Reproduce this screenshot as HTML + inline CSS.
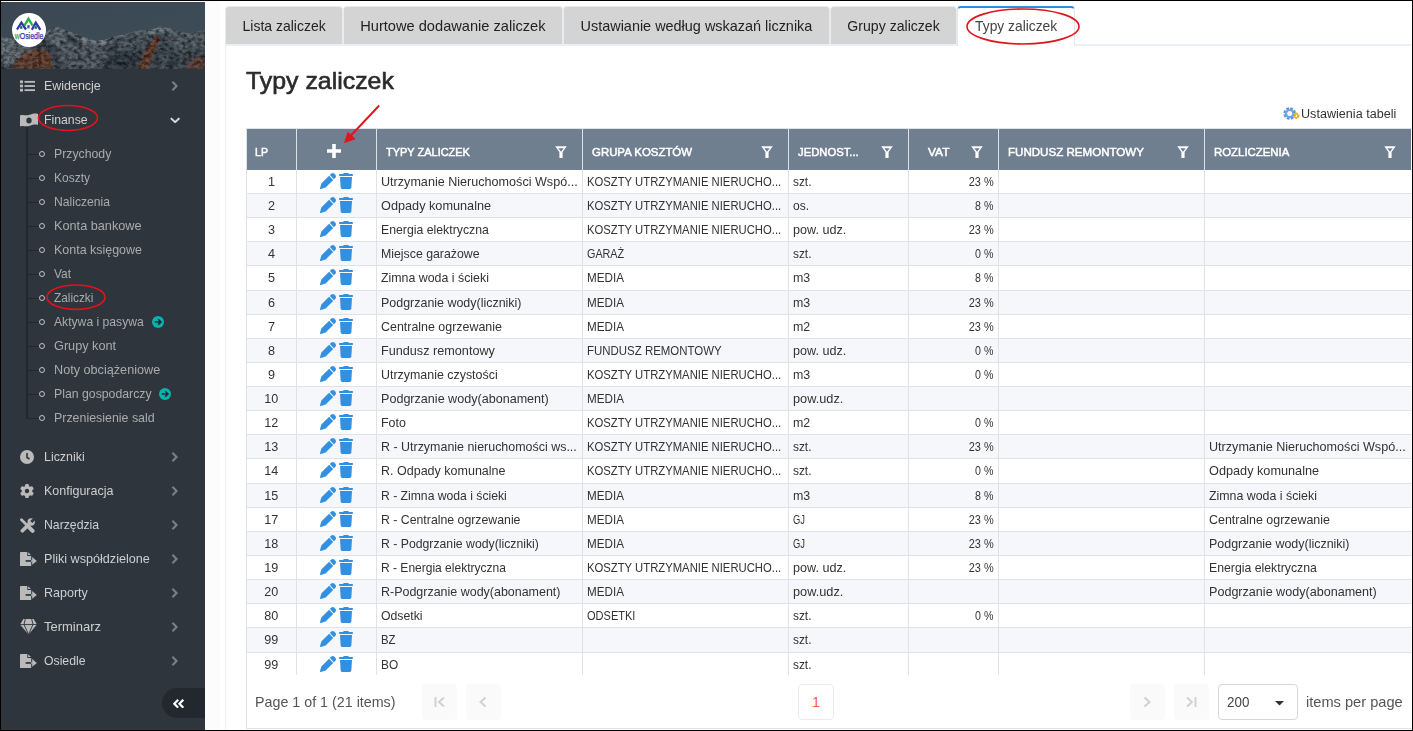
<!DOCTYPE html>
<html lang="pl"><head><meta charset="utf-8"><title>Typy zaliczek</title>
<style>
html,body{margin:0;padding:0}
body{width:1413px;height:731px;overflow:hidden;position:relative;background:#000;font-family:"Liberation Sans",sans-serif;color:#333}
#page{position:absolute;left:1px;top:1px;width:1411px;height:729px;background:#fff;overflow:hidden}
.abs{position:absolute}
.s{display:inline-block;white-space:nowrap}
#side{position:absolute;left:0;top:1px;width:204px;height:728px;background:#2e353d;color:#cfcfcf;font-size:13px}
#hero{position:absolute;left:0;top:0;width:204px;height:67px;overflow:hidden}
#logo{position:absolute;left:11px;top:11px;width:34px;height:34px;border-radius:50%;background:#fff}
.mi{position:absolute;left:0;width:204px;height:34px;line-height:34px}
.mi .tx{position:absolute;left:43px;top:0;white-space:nowrap}
.mi svg.i{position:absolute;fill:#bababa}
.mi svg.ch{position:absolute;left:169.5px;top:11.5px;width:7px;height:10px;fill:none;stroke:#7a8088;stroke-width:2.5}
.sm{position:absolute;left:0;width:204px;height:24px;line-height:24px;color:#ababab}
.sm .tx{position:absolute;left:53px;top:0;white-space:nowrap}
.sm .dot{position:absolute;left:38px;top:9px;width:4px;height:4px;border:1.5px solid #c4c4c4;border-radius:50%}
.sm .hl{position:absolute;left:27px;top:11.5px;width:11px;height:1.5px;background:#22272c}
.badge{position:absolute;top:5.5px;width:12px;height:12px;border-radius:50%;background:#08b3ac}
.tab{position:absolute;top:5px;height:38px;background:#d4d4d4;border:1px solid #e9ecef;border-bottom:none;border-radius:4px 4px 0 0;font-size:14.5px;line-height:38px;color:#222;white-space:nowrap;box-sizing:border-box;text-align:center}
#hdr{position:absolute;background:#6f7f90}
.hc{position:absolute;top:0;height:41px;line-height:46px;color:#fff;font-size:11.7px;white-space:nowrap;box-sizing:border-box;border-left:1px solid #dde1e6;-webkit-text-stroke:0.5px #fff}
.hc .t{position:absolute;left:8.5px;top:0}
.hc svg.f{position:absolute;right:15px;top:17px;width:12px;height:12px;fill:#fff}
.row{position:absolute;left:246px;width:1165px;box-sizing:border-box;border-bottom:1px solid #dfe2e6}
.row.alt{background:#f5f7fa}
.c{position:absolute;top:0;bottom:0;box-sizing:border-box;border-left:1px solid #dfe2e6;font-size:13px;white-space:nowrap;overflow:hidden;padding-left:4px;color:#333}
.c.r{text-align:right;padding-right:4.5px;padding-left:0}
.c.ctr{text-align:center;padding-left:1px}
svg.ic{position:absolute;fill:#338fdf}
.pb{position:absolute;top:683px;width:35px;height:36px;background:#fafafa;border-radius:4px}
.pb svg{position:absolute;fill:none;stroke:#d0d0d0;stroke-width:1.9}
</style></head><body><div id="page">
<div id="side">
<div id="hero"><svg width="204" height="67" viewBox="0 0 204 67" style="position:absolute;left:0;top:0">
<defs>
<linearGradient id="sky" x1="0" y1="0" x2="1" y2="1"><stop offset="0" stop-color="#3b4853"/><stop offset="0.6" stop-color="#3d4b56"/><stop offset="1" stop-color="#414e58"/></linearGradient>
<filter id="nz" x="0" y="0" width="100%" height="100%"><feTurbulence type="fractalNoise" baseFrequency="0.22 0.3" numOctaves="3" seed="7" result="n"/><feColorMatrix in="n" type="matrix" values="0 0 0 0 0  0 0 0 0 0  0 0 0 0 0  1.8 1.8 0 0 -1.45"/><feComposite in2="SourceGraphic" operator="in"/></filter>
<filter id="nz2" x="0" y="0" width="100%" height="100%"><feTurbulence type="fractalNoise" baseFrequency="0.18 0.28" numOctaves="3" seed="23" result="n"/><feColorMatrix in="n" type="matrix" values="0 0 0 0 1  0 0 0 0 1  0 0 0 0 1  0 2.0 2.0 0 -1.700"/><feComposite in2="SourceGraphic" operator="in"/></filter>
<filter id="bl"><feGaussianBlur stdDeviation="1.6"/></filter>
<clipPath id="mt"><path d="M0 35 L6 35.500 L12 37 L30 33 L46 29 L52 26 L57 25 L62 27 L75 32 L88 37 L96 39 L104 37.500 L112 35 L125 31.500 L138 28.500 L150 27.500 L158 24.500 L167 25.500 L176 29 L188 31.500 L195 30 L204 28 L204 67 L0 67Z"/></clipPath>
</defs>
<rect width="204" height="67" fill="url(#sky)"/>
<g clip-path="url(#mt)">
<rect width="204" height="67" fill="#3f4a54"/>
<g filter="url(#bl)">
<path d="M0 37 L6 37.500 L12 39 L30 35 L46 31 L52 28 L57 27 L62 29 L75 34 L88 39 L96 41 L104 39.500 L112 37 L125 33.500 L138 30.500 L150 29.500 L158 26.500 L167 27.500 L176 31 L188 33.500 L195 32 L204 30" fill="none" stroke="#76818a" stroke-width="7"/>
<path d="M0 35 L14 37 L26 36 L32 46 L18 60 L0 64Z" fill="#69747d"/>
<path d="M40 31 L57 25 L70 31 L84 40 L80 56 L62 50 L50 40Z" fill="#626d76"/>
<path d="M58 50 L80 44 L100 42 L108 52 L100 67 L60 67Z" fill="#56616a"/>
<path d="M108 36 L130 31 L148 28 L150 40 L136 50 L116 48Z" fill="#4f5a64"/>
<path d="M166 26 L190 31 L204 29 L204 46 L180 48 L166 40Z" fill="#57626b"/>
<path d="M160 48 L184 48 L190 58 L176 67 L160 67Z" fill="#4b5660"/>
<path d="M10 67 L15 58 L24 51 L36 47 L46 49 L51 55 L50 62 L54 67Z" fill="#6d4435"/>

<path d="M137 67 L142 54 L148 44 L154 35 L159 33 L159 38 L154 48 L150 58 L147 67Z" fill="#734432"/>
<path d="M184 67 L190 58 L198 54 L204 55 L204 67Z" fill="#63433a"/>
<path d="M100 67 L110 54 L124 48 L136 50 L138 58 L134 67Z" fill="#333d46"/>
<path d="M64 30 L74 35 L80 44 L68 42Z" fill="#36404a"/>
<path d="M26 36 L40 32 L44 40 L30 46Z" fill="#39434c"/>
<path d="M166 67 L168 54 L180 52 L178 62Z" fill="#333d46"/>
</g>
<rect width="204" height="67" fill="#2a333b" opacity="0.600" filter="url(#nz)"/>
<rect width="204" height="67" fill="#fff" opacity="0.060" filter="url(#nz2)"/>
</g>
</svg>
<div id="logo"><svg width="34" height="34" viewBox="0 0 34 34" style="position:absolute;left:0;top:0">
<g fill="none" stroke-width="2.3" stroke-linejoin="miter" transform="translate(0,1.500)">
<path d="M5 15 L9.400 8.200 L14 15" stroke="#3236a8"/>
<path d="M19.800 15.300 L23.800 8.200 L28.400 15.300" stroke="#3236a8"/>
<path d="M12.500 11 L16.400 4.300 L20.600 11" stroke="#22b14c"/>
</g>
<rect x="8" y="13" width="2.500" height="3" fill="#3dbb6a"/><rect x="15.200" y="12" width="2.500" height="3.500" fill="#3dbb6a"/><rect x="22.500" y="13" width="2.500" height="3" fill="#3dbb6a"/>
<rect x="8.400" y="13.400" width="1.600" height="2" fill="#3d45b0"/><rect x="15.600" y="12.500" width="1.600" height="2.400" fill="#3d45b0"/><rect x="22.900" y="13.400" width="1.600" height="2" fill="#3d45b0"/>
<text x="2.700" y="25.700" font-family="Liberation Sans, sans-serif" font-size="9.800" textLength="28.600" lengthAdjust="spacingAndGlyphs" stroke-width="0.250"><tspan fill="#22b14c" stroke="#22b14c">w</tspan><tspan fill="#3236a8" stroke="#3236a8">Osiedle</tspan></text>
</svg></div></div>
<div class="abs" style="left:25px;top:125px;width:2px;height:292px;background:#23282e"></div>
<div class="mi" style="top:67px"><svg class="i" style="left:18.5px;top:10.5px;width:15px;height:12px" preserveAspectRatio="none" viewBox="0 0 15 13"><rect x="0" y="0.5" width="3" height="3"/><rect x="0" y="5" width="3" height="3"/><rect x="0" y="9.5" width="3" height="3"/><rect x="4.5" y="1" width="10.5" height="2"/><rect x="4.5" y="5.5" width="10.5" height="2"/><rect x="4.5" y="10" width="10.5" height="2"/></svg><span class="tx"><span class="s x-mi" style="transform-origin:0 50%;transform:scaleX(0.9582)">Ewidencje</span></span><svg class="ch" viewBox="0 0 8 12"><path d="M1.5 1 L6.5 6 L1.5 11"/></svg></div>
<div class="mi" style="top:101px"><svg class="i" style="left:19px;top:10px;width:18px;height:14px" viewBox="0 0 18 14"><path fill-rule="evenodd" d="M0 2.5 C3 1 6 3 9 2 C12 1 15 0 18 1 L18 12 C15 11 12 12 9 13 C6 14 3 12 0 13.5Z M9 4.5 A2.7 3 0 1 0 9 10.5 A2.7 3 0 1 0 9 4.5Z"/></svg><span class="tx"><span class="s x-mi" style="transform-origin:0 50%;transform:scaleX(0.9440)">Finanse</span></span><svg class="ch" style="left:169px;top:13.8px;width:10.2px;height:6.4px;stroke:#d8d8d8;stroke-width:2.3" preserveAspectRatio="none" viewBox="0 0 12 8"><path d="M1 1.5 L6 6.5 L11 1.5"/></svg></div>
<div class="mi" style="top:438px"><svg class="i" style="left:19px;top:10px;width:14px;height:14px" viewBox="0 0 14 14"><circle cx="7" cy="7" r="7"/><path d="M7 3 L7 7.5 L9.5 9" stroke="#2e353d" stroke-width="1.6" fill="none"/></svg><span class="tx"><span class="s x-mi" style="transform-origin:0 50%;transform:scaleX(0.9536)">Liczniki</span></span><svg class="ch" viewBox="0 0 8 12"><path d="M1.5 1 L6.5 6 L1.5 11"/></svg></div>
<div class="mi" style="top:472px"><svg class="i" style="left:19px;top:10px;width:14px;height:14px" viewBox="0 0 512 512"><path d="M495.900 166.600c3.200 8.700 .5 18.400-6.400 24.600l-43.300 39.400c1.100 8.300 1.700 16.800 1.700 25.400s-.6 17.100-1.700 25.400l43.300 39.400c6.900 6.200 9.600 15.900 6.400 24.600c-4.400 11.900-9.700 23.300-15.800 34.300l-4.700 8.100c-6.600 11-14 21.400-22.100 31.200c-5.900 7.200-15.700 9.600-24.500 6.800l-55.700-17.700c-13.400 10.300-28.200 18.900-44 25.400l-12.500 57.100c-2 9.100-9 16.300-18.200 17.800c-13.800 2.300-28 3.500-42.500 3.500s-28.700-1.200-42.500-3.500c-9.200-1.500-16.200-8.700-18.200-17.800l-12.500-57.100c-15.800-6.500-30.600-15.100-44-25.400L83.100 425.900c-8.800 2.800-18.600 .3-24.500-6.800c-8.100-9.800-15.500-20.200-22.100-31.200l-4.700-8.100c-6.100-11-11.400-22.400-15.800-34.300c-3.200-8.700-.5-18.400 6.400-24.600l43.300-39.400C64.600 273.100 64 264.600 64 256s.6-17.100 1.700-25.400L22.400 191.200c-6.900-6.200-9.600-15.900-6.400-24.600c4.400-11.900 9.700-23.300 15.800-34.300l4.700-8.100c6.600-11 14-21.400 22.100-31.200c5.900-7.200 15.700-9.600 24.500-6.800l55.700 17.700c13.400-10.300 28.200-18.900 44-25.400l12.500-57.100c2-9.100 9-16.300 18.200-17.800C227.300 1.200 241.500 0 256 0s28.700 1.200 42.500 3.500c9.200 1.500 16.200 8.700 18.200 17.800l12.500 57.100c15.800 6.500 30.600 15.100 44 25.400l55.700-17.700c8.800-2.800 18.600-.3 24.500 6.800c8.100 9.800 15.500 20.200 22.100 31.200l4.700 8.100c6.100 11 11.400 22.400 15.800 34.300zM256 336a80 80 0 1 0 0-160 80 80 0 1 0 0 160z"/></svg><span class="tx"><span class="s x-mi" style="transform-origin:0 50%;transform:scaleX(0.9606)">Konfiguracja</span></span><svg class="ch" viewBox="0 0 8 12"><path d="M1.5 1 L6.5 6 L1.5 11"/></svg></div>
<div class="mi" style="top:506px"><svg class="i" style="left:18.5px;top:9.5px;width:15px;height:15px" viewBox="0 0 15 15"><g stroke="#bababa" stroke-linecap="round" fill="none"><path d="M1.500 1.700 L7 7.200" stroke-width="2.800"/><path d="M8.600 8.800 L12.600 12.800" stroke-width="4"/><path d="M2.400 12.800 L9.500 5.700" stroke-width="3.700"/></g><circle cx="11.200" cy="4" r="3.700"/><path d="M11.300 3.900 L15.500 -0.300" stroke="#2e353d" stroke-width="2.800" fill="none"/></svg><span class="tx"><span class="s x-mi" style="transform-origin:0 50%;transform:scaleX(0.9418)">Narzędzia</span></span><svg class="ch" viewBox="0 0 8 12"><path d="M1.5 1 L6.5 6 L1.5 11"/></svg></div>
<div class="mi" style="top:540px"><svg class="i" style="left:18.5px;top:9.5px;width:17px;height:14.5px" viewBox="0 0 17 14.500"><path d="M0 0.800 A0.800 0.800 0 0 1 0.800 0 H7.300 V3.900 H11.200 V13.700 A0.800 0.800 0 0 1 10.400 14.500 H0.800 A0.800 0.800 0 0 1 0 13.700Z"/><path d="M8.100 0.200 L11 3.100 H8.100Z"/><rect x="5.600" y="8.100" width="6.600" height="1.700" fill="#2e353d"/><rect x="11.200" y="8.100" width="1.200" height="1.700"/><path d="M12.200 5.100 L16.800 8.950 L12.200 12.800Z"/></svg><span class="tx"><span class="s x-mi" style="transform-origin:0 50%;transform:scaleX(0.9696)">Pliki współdzielone</span></span><svg class="ch" viewBox="0 0 8 12"><path d="M1.5 1 L6.5 6 L1.5 11"/></svg></div>
<div class="mi" style="top:574px"><svg class="i" style="left:18.5px;top:9.5px;width:17px;height:14.5px" viewBox="0 0 17 14.500"><path d="M0 0.800 A0.800 0.800 0 0 1 0.800 0 H7.300 V3.900 H11.200 V13.700 A0.800 0.800 0 0 1 10.400 14.500 H0.800 A0.800 0.800 0 0 1 0 13.700Z"/><path d="M8.100 0.200 L11 3.100 H8.100Z"/><rect x="5.600" y="8.100" width="6.600" height="1.700" fill="#2e353d"/><rect x="11.200" y="8.100" width="1.200" height="1.700"/><path d="M12.200 5.100 L16.800 8.950 L12.200 12.800Z"/></svg><span class="tx"><span class="s x-mi" style="transform-origin:0 50%;transform:scaleX(0.9618)">Raporty</span></span><svg class="ch" viewBox="0 0 8 12"><path d="M1.5 1 L6.5 6 L1.5 11"/></svg></div>
<div class="mi" style="top:608px"><svg class="i" style="left:18.6px;top:9.3px;width:17px;height:15.4px" preserveAspectRatio="none" viewBox="0 0 17 15"><path d="M3.400 0 H13.600 L17 5.300 L8.500 15 L0 5.300Z"/><g stroke="#2e353d" stroke-width="0.900" fill="none"><path d="M0 5.400 H17"/><path d="M5.300 0 L4 5.400 L8.500 15 L13 5.400 L11.700 0"/></g></svg><span class="tx"><span class="s x-mi" style="transform-origin:0 50%;transform:scaleX(0.9988)">Terminarz</span></span><svg class="ch" viewBox="0 0 8 12"><path d="M1.5 1 L6.5 6 L1.5 11"/></svg></div>
<div class="mi" style="top:642px"><svg class="i" style="left:18.5px;top:9.5px;width:17px;height:14.5px" viewBox="0 0 17 14.500"><path d="M0 0.800 A0.800 0.800 0 0 1 0.800 0 H7.300 V3.900 H11.200 V13.700 A0.800 0.800 0 0 1 10.400 14.500 H0.800 A0.800 0.800 0 0 1 0 13.700Z"/><path d="M8.100 0.200 L11 3.100 H8.100Z"/><rect x="5.600" y="8.100" width="6.600" height="1.700" fill="#2e353d"/><rect x="11.200" y="8.100" width="1.200" height="1.700"/><path d="M12.200 5.100 L16.800 8.950 L12.200 12.800Z"/></svg><span class="tx"><span class="s x-mi" style="transform-origin:0 50%;transform:scaleX(0.9419)">Osiedle</span></span><svg class="ch" viewBox="0 0 8 12"><path d="M1.5 1 L6.5 6 L1.5 11"/></svg></div>
<div class="sm" style="top:140px"><span class="hl"></span><span class="dot"></span><span class="tx"><span class="s x-sm" style="transform-origin:0 50%;transform:scaleX(0.9437)">Przychody</span></span></div>
<div class="sm" style="top:164px"><span class="hl"></span><span class="dot"></span><span class="tx"><span class="s x-sm" style="transform-origin:0 50%;transform:scaleX(0.9218)">Koszty</span></span></div>
<div class="sm" style="top:188px"><span class="hl"></span><span class="dot"></span><span class="tx"><span class="s x-sm" style="transform-origin:0 50%;transform:scaleX(0.9340)">Naliczenia</span></span></div>
<div class="sm" style="top:212px"><span class="hl"></span><span class="dot"></span><span class="tx"><span class="s x-sm" style="transform-origin:0 50%;transform:scaleX(0.9775)">Konta bankowe</span></span></div>
<div class="sm" style="top:236px"><span class="hl"></span><span class="dot"></span><span class="tx"><span class="s x-sm" style="transform-origin:0 50%;transform:scaleX(0.9586)">Konta księgowe</span></span></div>
<div class="sm" style="top:260px"><span class="hl"></span><span class="dot"></span><span class="tx"><span class="s x-sm" style="transform-origin:0 50%;transform:scaleX(0.9189)">Vat</span></span></div>
<div class="sm" style="top:284px"><span class="hl"></span><span class="dot"></span><span class="tx"><span class="s x-sm" style="transform-origin:0 50%;transform:scaleX(0.9091)">Zaliczki</span></span></div>
<div class="sm" style="top:308px"><span class="hl"></span><span class="dot"></span><span class="tx"><span class="s x-sm" style="transform-origin:0 50%;transform:scaleX(0.9343)">Aktywa i pasywa</span></span><span class="badge" style="left:151px"><svg viewBox="0 0 12 12" width="12" height="12" style="position:absolute;left:0;top:0"><path d="M2.8 6 H8.600 M6.200 3.300 L8.900 6 L6.200 8.700" stroke="#1d2a30" stroke-width="1.600" fill="none"/></svg></span></div>
<div class="sm" style="top:332px"><span class="hl"></span><span class="dot"></span><span class="tx"><span class="s x-sm" style="transform-origin:0 50%;transform:scaleX(0.9770)">Grupy kont</span></span></div>
<div class="sm" style="top:356px"><span class="hl"></span><span class="dot"></span><span class="tx"><span class="s x-sm" style="transform-origin:0 50%;transform:scaleX(0.9732)">Noty obciążeniowe</span></span></div>
<div class="sm" style="top:380px"><span class="hl"></span><span class="dot"></span><span class="tx"><span class="s x-sm" style="transform-origin:0 50%;transform:scaleX(0.9442)">Plan gospodarczy</span></span><span class="badge" style="left:158px"><svg viewBox="0 0 12 12" width="12" height="12" style="position:absolute;left:0;top:0"><path d="M2.8 6 H8.600 M6.200 3.300 L8.900 6 L6.200 8.700" stroke="#1d2a30" stroke-width="1.600" fill="none"/></svg></span></div>
<div class="sm" style="top:404px"><span class="hl"></span><span class="dot"></span><span class="tx"><span class="s x-sm" style="transform-origin:0 50%;transform:scaleX(0.9542)">Przeniesienie sald</span></span></div>
<div class="abs" style="left:161px;top:686px;width:43px;height:30px;background:#23282e;border-radius:15px 0 0 15px"><svg viewBox="0 0 14 12" style="position:absolute;left:11px;top:10.5px;width:12px;height:9.5px" preserveAspectRatio="none" fill="none" stroke="#fff" stroke-width="2.600"><path d="M6 1 L1.500 6 L6 11 M12 1 L7.500 6 L12 11"/></svg></div>
<svg class="abs" style="left:0;top:0" width="204" height="728"><ellipse cx="67" cy="116" rx="29.500" ry="12.500" fill="none" stroke="#e0141c" stroke-width="1.600"/><ellipse cx="75" cy="295.200" rx="29" ry="12.200" fill="none" stroke="#e0141c" stroke-width="1.600"/></svg>
</div>
<div class="abs" style="left:204px;top:0;width:15px;height:729px;background:#fcfcfc"></div>
<div class="abs" style="left:224px;top:43px;width:1200px;height:700px;border:1px solid #eceff3;border-top:2px solid #eceff3"></div>
<div class="tab" style="left:224px;width:118px"><span class="s x-tab" style="transform-origin:50% 50%;transform:scaleX(0.9630)">Lista zaliczek</span></div>
<div class="tab" style="left:342px;width:220px"><span class="s x-tab" style="transform-origin:50% 50%;transform:scaleX(1.0086)">Hurtowe dodawanie zaliczek</span></div>
<div class="tab" style="left:562px;width:267px"><span class="s x-tab" style="transform-origin:50% 50%;transform:scaleX(0.9951)">Ustawianie według wskazań licznika</span></div>
<div class="tab" style="left:829px;width:127px"><span class="s x-tab" style="transform-origin:50% 50%;transform:scaleX(0.9715)">Grupy zaliczek</span></div>
<div class="tab" style="left:956px;width:118px;background:#fff;border-top:2px solid #2f8ed6;height:40px;line-height:36px;border-left-color:#e3e6ea;border-right-color:#e3e6ea;color:#444"><span class="s x-tab" style="transform-origin:50% 50%;transform:scaleX(0.9520)">Typy zaliczek</span></div>
<svg class="abs" style="left:950px;top:0" width="140" height="50"><ellipse cx="72" cy="25.500" rx="56" ry="17.500" fill="none" stroke="#e0141c" stroke-width="1.600"/></svg>
<div class="abs" style="left:245px;top:64px;font-size:24px;color:#2b2b2b;line-height:32px;white-space:nowrap;-webkit-text-stroke:0.600px #2b2b2b"><span class="s x-title" style="transform-origin:0 50%;transform:scaleX(1.0360)">Typy zaliczek</span></div>
<div class="abs" style="left:1300px;top:104px;font-size:12.500px;line-height:18px;color:#333;white-space:nowrap"><span class="s x-set" style="transform-origin:0 50%;transform:scaleX(1.0083)">Ustawienia tabeli</span></div>
<svg class="abs" style="left:1282px;top:105px;width:17px;height:15px" viewBox="0 0 17 15"><circle cx="6.700" cy="7.500" r="4.600" fill="none" stroke="#5b93d6" stroke-width="3.400" stroke-dasharray="2.400 1.210"/><circle cx="6.700" cy="7.500" r="3.600" fill="none" stroke="#6ea5e2" stroke-width="2.200"/><circle cx="13.200" cy="9.800" r="2.300" fill="none" stroke="#e6b422" stroke-width="2" stroke-dasharray="1.500 .9"/><circle cx="13.200" cy="9.800" r="1.800" fill="none" stroke="#e6b422" stroke-width="1.200"/></svg>
<div class="abs" style="left:245px;top:127px;width:1165px;height:599px;border:1px solid #dfe2e6"></div>
<div id="hdr" style="left:246px;top:128px;width:1164px;height:41px">
<div class="hc" style="left:-1px;width:50px;border-left:none;"><span class="t"><span class="s x-h" style="transform-origin:0 50%;transform:scaleX(0.9067)">LP</span></span></div>
<div class="hc" style="left:49px;width:80px;"><svg viewBox="0 0 14 14" style="position:absolute;left:30px;top:15px;width:14px;height:14px"><path d="M5.200 0 H8.800 V5.200 H14 V8.800 H8.800 V14 H5.200 V8.800 H0 V5.200 H5.200Z" fill="#fff"/></svg></div>
<div class="hc" style="left:129px;width:206px;"><span class="t"><span class="s x-h" style="transform-origin:0 50%;transform:scaleX(0.9388)">TYPY ZALICZEK</span></span><svg class="f" viewBox="0 0 12 12"><path fill-rule="evenodd" d="M0.300 0.300 H11.700 L7.600 6 V12 H4.400 V6Z M3.300 2.300 H8.700 L6 5.700Z"/></svg></div>
<div class="hc" style="left:335px;width:206px;"><span class="t"><span class="s x-h" style="transform-origin:0 50%;transform:scaleX(0.9769)">GRUPA KOSZTÓW</span></span><svg class="f" viewBox="0 0 12 12"><path fill-rule="evenodd" d="M0.300 0.300 H11.700 L7.600 6 V12 H4.400 V6Z M3.300 2.300 H8.700 L6 5.700Z"/></svg></div>
<div class="hc" style="left:541px;width:120px;"><span class="t"><span class="s x-h" style="transform-origin:0 50%;transform:scaleX(0.9645)">JEDNOST...</span></span><svg class="f" viewBox="0 0 12 12"><path fill-rule="evenodd" d="M0.300 0.300 H11.700 L7.600 6 V12 H4.400 V6Z M3.300 2.300 H8.700 L6 5.700Z"/></svg></div>
<div class="hc" style="left:661px;width:90px;"><span class="t" style="left:19px"><span class="s x-h" style="transform-origin:0 50%;transform:scaleX(1.0209)">VAT</span></span><svg class="f" viewBox="0 0 12 12"><path fill-rule="evenodd" d="M0.300 0.300 H11.700 L7.600 6 V12 H4.400 V6Z M3.300 2.300 H8.700 L6 5.700Z"/></svg></div>
<div class="hc" style="left:751px;width:206px;"><span class="t"><span class="s x-h" style="transform-origin:0 50%;transform:scaleX(0.9896)">FUNDUSZ REMONTOWY</span></span><svg class="f" viewBox="0 0 12 12"><path fill-rule="evenodd" d="M0.300 0.300 H11.700 L7.600 6 V12 H4.400 V6Z M3.300 2.300 H8.700 L6 5.700Z"/></svg></div>
<div class="hc" style="left:957px;width:207px;"><span class="t"><span class="s x-h" style="transform-origin:0 50%;transform:scaleX(0.9746)">ROZLICZENIA</span></span><svg class="f" viewBox="0 0 12 12"><path fill-rule="evenodd" d="M0.300 0.300 H11.700 L7.600 6 V12 H4.400 V6Z M3.300 2.300 H8.700 L6 5.700Z"/></svg></div>
</div>
<div class="row" style="top:169px;height:24px;line-height:24px;">
<div class="c ctr" style="left:-1px;width:50px;border-left:none;"><span class="s x-n" style="transform-origin:50% 50%;transform:scaleX(0.9700)">1</span></div>
<div class="c" style="left:49px;width:80px;"><svg class="ic" style="left:23px;top:3px;width:16px;height:16px" viewBox="0 0 512 512"><path d="M362.7 19.3L314.3 67.7 444.3 197.7l48.4-48.4c25-25 25-65.5 0-90.5L453.3 19.3c-25-25-65.5-25-90.5 0zm-71 71L58.600 323.500c-10.400 10.400-18 23.300-22.200 37.400L1 481.200C-1.500 489.700 .8 498.800 7 505s15.300 8.500 23.700 6.100l120.300-35.400c14.100-4.200 27-11.800 37.400-22.200L421.700 220.300 291.700 90.300z"/></svg><svg class="ic" style="left:42px;top:3px;width:14px;height:16px" viewBox="0 0 448 512"><path d="M135.200 17.700L128 32H32C14.300 32 0 46.300 0 64S14.300 96 32 96H416c17.700 0 32-14.300 32-32s-14.300-32-32-32H320l-7.200-14.300C307.400 6.800 296.300 0 284.200 0H163.800c-12.100 0-23.200 6.800-28.600 17.700zM416 128H32L53.200 467c1.600 25.300 22.600 45 47.900 45H346.900c25.300 0 46.300-19.700 47.900-45L416 128z"/></svg></div>
<div class="c" style="left:129px;width:206px;"><span class="s x-c" style="transform-origin:0 50%;transform:scaleX(0.9688)">Utrzymanie Nieruchomości Wspó...</span></div>
<div class="c" style="left:335px;width:206px;"><span class="s x-c" style="transform-origin:0 50%;transform:scaleX(0.8682)">KOSZTY UTRZYMANIE NIERUCHO...</span></div>
<div class="c" style="left:541px;width:120px;"><span class="s x-c" style="transform-origin:0 50%;transform:scaleX(0.9127)">szt.</span></div>
<div class="c r" style="left:661px;width:90px;"><span class="s x-c" style="transform-origin:100% 50%;transform:scaleX(0.8413)">23 %</span></div>
<div class="c" style="left:751px;width:206px;"></div>
<div class="c" style="left:957px;width:207px;"></div>
</div>
<div class="row alt" style="top:193px;height:24px;line-height:24px;">
<div class="c ctr" style="left:-1px;width:50px;border-left:none;"><span class="s x-n" style="transform-origin:50% 50%;transform:scaleX(0.9700)">2</span></div>
<div class="c" style="left:49px;width:80px;"><svg class="ic" style="left:23px;top:3px;width:16px;height:16px" viewBox="0 0 512 512"><path d="M362.7 19.3L314.3 67.7 444.3 197.7l48.4-48.4c25-25 25-65.5 0-90.5L453.3 19.3c-25-25-65.5-25-90.5 0zm-71 71L58.600 323.500c-10.400 10.400-18 23.300-22.200 37.400L1 481.200C-1.500 489.700 .8 498.800 7 505s15.300 8.500 23.700 6.100l120.300-35.400c14.100-4.200 27-11.800 37.400-22.200L421.700 220.300 291.700 90.300z"/></svg><svg class="ic" style="left:42px;top:3px;width:14px;height:16px" viewBox="0 0 448 512"><path d="M135.200 17.700L128 32H32C14.300 32 0 46.300 0 64S14.300 96 32 96H416c17.700 0 32-14.300 32-32s-14.300-32-32-32H320l-7.200-14.300C307.400 6.800 296.300 0 284.200 0H163.800c-12.100 0-23.200 6.800-28.600 17.700zM416 128H32L53.200 467c1.600 25.300 22.600 45 47.900 45H346.900c25.300 0 46.300-19.700 47.900-45L416 128z"/></svg></div>
<div class="c" style="left:129px;width:206px;"><span class="s x-c" style="transform-origin:0 50%;transform:scaleX(0.9768)">Odpady komunalne</span></div>
<div class="c" style="left:335px;width:206px;"><span class="s x-c" style="transform-origin:0 50%;transform:scaleX(0.8682)">KOSZTY UTRZYMANIE NIERUCHO...</span></div>
<div class="c" style="left:541px;width:120px;"><span class="s x-c" style="transform-origin:0 50%;transform:scaleX(0.9265)">os.</span></div>
<div class="c r" style="left:661px;width:90px;"><span class="s x-c" style="transform-origin:100% 50%;transform:scaleX(0.8187)">8 %</span></div>
<div class="c" style="left:751px;width:206px;"></div>
<div class="c" style="left:957px;width:207px;"></div>
</div>
<div class="row" style="top:217px;height:24px;line-height:24px;">
<div class="c ctr" style="left:-1px;width:50px;border-left:none;"><span class="s x-n" style="transform-origin:50% 50%;transform:scaleX(0.9700)">3</span></div>
<div class="c" style="left:49px;width:80px;"><svg class="ic" style="left:23px;top:3px;width:16px;height:16px" viewBox="0 0 512 512"><path d="M362.7 19.3L314.3 67.7 444.3 197.7l48.4-48.4c25-25 25-65.5 0-90.5L453.3 19.3c-25-25-65.5-25-90.5 0zm-71 71L58.600 323.500c-10.400 10.400-18 23.300-22.200 37.400L1 481.200C-1.500 489.700 .8 498.800 7 505s15.300 8.500 23.700 6.100l120.300-35.400c14.100-4.200 27-11.800 37.400-22.200L421.700 220.300 291.700 90.300z"/></svg><svg class="ic" style="left:42px;top:3px;width:14px;height:16px" viewBox="0 0 448 512"><path d="M135.200 17.700L128 32H32C14.300 32 0 46.300 0 64S14.300 96 32 96H416c17.700 0 32-14.300 32-32s-14.300-32-32-32H320l-7.200-14.300C307.400 6.800 296.300 0 284.200 0H163.800c-12.100 0-23.200 6.800-28.600 17.700zM416 128H32L53.200 467c1.600 25.300 22.600 45 47.900 45H346.900c25.300 0 46.300-19.700 47.900-45L416 128z"/></svg></div>
<div class="c" style="left:129px;width:206px;"><span class="s x-c" style="transform-origin:0 50%;transform:scaleX(0.9444)">Energia elektryczna</span></div>
<div class="c" style="left:335px;width:206px;"><span class="s x-c" style="transform-origin:0 50%;transform:scaleX(0.8682)">KOSZTY UTRZYMANIE NIERUCHO...</span></div>
<div class="c" style="left:541px;width:120px;"><span class="s x-c" style="transform-origin:0 50%;transform:scaleX(0.9684)">pow. udz.</span></div>
<div class="c r" style="left:661px;width:90px;"><span class="s x-c" style="transform-origin:100% 50%;transform:scaleX(0.8413)">23 %</span></div>
<div class="c" style="left:751px;width:206px;"></div>
<div class="c" style="left:957px;width:207px;"></div>
</div>
<div class="row alt" style="top:241px;height:24px;line-height:24px;">
<div class="c ctr" style="left:-1px;width:50px;border-left:none;"><span class="s x-n" style="transform-origin:50% 50%;transform:scaleX(0.9700)">4</span></div>
<div class="c" style="left:49px;width:80px;"><svg class="ic" style="left:23px;top:3px;width:16px;height:16px" viewBox="0 0 512 512"><path d="M362.7 19.3L314.3 67.7 444.3 197.7l48.4-48.4c25-25 25-65.5 0-90.5L453.3 19.3c-25-25-65.5-25-90.5 0zm-71 71L58.600 323.500c-10.400 10.400-18 23.300-22.200 37.400L1 481.200C-1.500 489.700 .8 498.800 7 505s15.300 8.500 23.700 6.100l120.300-35.400c14.100-4.200 27-11.800 37.400-22.200L421.700 220.300 291.700 90.300z"/></svg><svg class="ic" style="left:42px;top:3px;width:14px;height:16px" viewBox="0 0 448 512"><path d="M135.200 17.700L128 32H32C14.300 32 0 46.300 0 64S14.300 96 32 96H416c17.700 0 32-14.300 32-32s-14.300-32-32-32H320l-7.200-14.300C307.400 6.800 296.300 0 284.200 0H163.800c-12.100 0-23.200 6.800-28.600 17.700zM416 128H32L53.200 467c1.600 25.300 22.600 45 47.900 45H346.900c25.300 0 46.300-19.700 47.900-45L416 128z"/></svg></div>
<div class="c" style="left:129px;width:206px;"><span class="s x-c" style="transform-origin:0 50%;transform:scaleX(0.9473)">Miejsce garażowe</span></div>
<div class="c" style="left:335px;width:206px;"><span class="s x-c" style="transform-origin:0 50%;transform:scaleX(0.8296)">GARAŻ</span></div>
<div class="c" style="left:541px;width:120px;"><span class="s x-c" style="transform-origin:0 50%;transform:scaleX(0.9127)">szt.</span></div>
<div class="c r" style="left:661px;width:90px;"><span class="s x-c" style="transform-origin:100% 50%;transform:scaleX(0.8187)">0 %</span></div>
<div class="c" style="left:751px;width:206px;"></div>
<div class="c" style="left:957px;width:207px;"></div>
</div>
<div class="row" style="top:265px;height:25px;line-height:24px;">
<div class="c ctr" style="left:-1px;width:50px;border-left:none;"><span class="s x-n" style="transform-origin:50% 50%;transform:scaleX(0.9700)">5</span></div>
<div class="c" style="left:49px;width:80px;"><svg class="ic" style="left:23px;top:3px;width:16px;height:16px" viewBox="0 0 512 512"><path d="M362.7 19.3L314.3 67.7 444.3 197.7l48.4-48.4c25-25 25-65.5 0-90.5L453.3 19.3c-25-25-65.5-25-90.5 0zm-71 71L58.600 323.500c-10.400 10.400-18 23.300-22.200 37.400L1 481.200C-1.500 489.700 .8 498.800 7 505s15.300 8.500 23.700 6.100l120.300-35.400c14.100-4.200 27-11.800 37.400-22.200L421.700 220.300 291.700 90.300z"/></svg><svg class="ic" style="left:42px;top:3px;width:14px;height:16px" viewBox="0 0 448 512"><path d="M135.200 17.700L128 32H32C14.300 32 0 46.300 0 64S14.300 96 32 96H416c17.700 0 32-14.300 32-32s-14.300-32-32-32H320l-7.200-14.300C307.400 6.800 296.300 0 284.200 0H163.800c-12.100 0-23.200 6.800-28.600 17.700zM416 128H32L53.200 467c1.600 25.300 22.600 45 47.900 45H346.900c25.300 0 46.300-19.700 47.900-45L416 128z"/></svg></div>
<div class="c" style="left:129px;width:206px;"><span class="s x-c" style="transform-origin:0 50%;transform:scaleX(0.9512)">Zimna woda i ścieki</span></div>
<div class="c" style="left:335px;width:206px;"><span class="s x-c" style="transform-origin:0 50%;transform:scaleX(0.8963)">MEDIA</span></div>
<div class="c" style="left:541px;width:120px;"><span class="s x-c" style="transform-origin:0 50%;transform:scaleX(0.9535)">m3</span></div>
<div class="c r" style="left:661px;width:90px;"><span class="s x-c" style="transform-origin:100% 50%;transform:scaleX(0.8187)">8 %</span></div>
<div class="c" style="left:751px;width:206px;"></div>
<div class="c" style="left:957px;width:207px;"></div>
</div>
<div class="row alt" style="top:290px;height:24px;line-height:24px;">
<div class="c ctr" style="left:-1px;width:50px;border-left:none;"><span class="s x-n" style="transform-origin:50% 50%;transform:scaleX(0.9700)">6</span></div>
<div class="c" style="left:49px;width:80px;"><svg class="ic" style="left:23px;top:3px;width:16px;height:16px" viewBox="0 0 512 512"><path d="M362.7 19.3L314.3 67.7 444.3 197.7l48.4-48.4c25-25 25-65.5 0-90.5L453.3 19.3c-25-25-65.5-25-90.5 0zm-71 71L58.600 323.500c-10.400 10.400-18 23.300-22.200 37.400L1 481.200C-1.500 489.700 .8 498.800 7 505s15.300 8.500 23.700 6.100l120.300-35.400c14.100-4.200 27-11.800 37.400-22.200L421.700 220.300 291.700 90.300z"/></svg><svg class="ic" style="left:42px;top:3px;width:14px;height:16px" viewBox="0 0 448 512"><path d="M135.200 17.700L128 32H32C14.300 32 0 46.300 0 64S14.300 96 32 96H416c17.700 0 32-14.300 32-32s-14.300-32-32-32H320l-7.200-14.300C307.400 6.800 296.300 0 284.200 0H163.800c-12.100 0-23.200 6.800-28.600 17.700zM416 128H32L53.200 467c1.600 25.300 22.600 45 47.900 45H346.900c25.300 0 46.300-19.700 47.900-45L416 128z"/></svg></div>
<div class="c" style="left:129px;width:206px;"><span class="s x-c" style="transform-origin:0 50%;transform:scaleX(0.9578)">Podgrzanie wody(liczniki)</span></div>
<div class="c" style="left:335px;width:206px;"><span class="s x-c" style="transform-origin:0 50%;transform:scaleX(0.8963)">MEDIA</span></div>
<div class="c" style="left:541px;width:120px;"><span class="s x-c" style="transform-origin:0 50%;transform:scaleX(0.9535)">m3</span></div>
<div class="c r" style="left:661px;width:90px;"><span class="s x-c" style="transform-origin:100% 50%;transform:scaleX(0.8413)">23 %</span></div>
<div class="c" style="left:751px;width:206px;"></div>
<div class="c" style="left:957px;width:207px;"></div>
</div>
<div class="row" style="top:314px;height:24px;line-height:24px;">
<div class="c ctr" style="left:-1px;width:50px;border-left:none;"><span class="s x-n" style="transform-origin:50% 50%;transform:scaleX(0.9700)">7</span></div>
<div class="c" style="left:49px;width:80px;"><svg class="ic" style="left:23px;top:3px;width:16px;height:16px" viewBox="0 0 512 512"><path d="M362.7 19.3L314.3 67.7 444.3 197.7l48.4-48.4c25-25 25-65.5 0-90.5L453.3 19.3c-25-25-65.5-25-90.5 0zm-71 71L58.600 323.500c-10.400 10.400-18 23.300-22.200 37.400L1 481.200C-1.500 489.700 .8 498.800 7 505s15.300 8.500 23.700 6.100l120.300-35.400c14.100-4.200 27-11.800 37.400-22.200L421.700 220.300 291.700 90.300z"/></svg><svg class="ic" style="left:42px;top:3px;width:14px;height:16px" viewBox="0 0 448 512"><path d="M135.200 17.700L128 32H32C14.300 32 0 46.300 0 64S14.300 96 32 96H416c17.700 0 32-14.300 32-32s-14.300-32-32-32H320l-7.200-14.300C307.400 6.800 296.300 0 284.200 0H163.800c-12.100 0-23.200 6.800-28.600 17.700zM416 128H32L53.200 467c1.600 25.300 22.600 45 47.900 45H346.900c25.300 0 46.300-19.700 47.900-45L416 128z"/></svg></div>
<div class="c" style="left:129px;width:206px;"><span class="s x-c" style="transform-origin:0 50%;transform:scaleX(0.9562)">Centralne ogrzewanie</span></div>
<div class="c" style="left:335px;width:206px;"><span class="s x-c" style="transform-origin:0 50%;transform:scaleX(0.8963)">MEDIA</span></div>
<div class="c" style="left:541px;width:120px;"><span class="s x-c" style="transform-origin:0 50%;transform:scaleX(0.9535)">m2</span></div>
<div class="c r" style="left:661px;width:90px;"><span class="s x-c" style="transform-origin:100% 50%;transform:scaleX(0.8413)">23 %</span></div>
<div class="c" style="left:751px;width:206px;"></div>
<div class="c" style="left:957px;width:207px;"></div>
</div>
<div class="row alt" style="top:338px;height:24px;line-height:24px;">
<div class="c ctr" style="left:-1px;width:50px;border-left:none;"><span class="s x-n" style="transform-origin:50% 50%;transform:scaleX(0.9700)">8</span></div>
<div class="c" style="left:49px;width:80px;"><svg class="ic" style="left:23px;top:3px;width:16px;height:16px" viewBox="0 0 512 512"><path d="M362.7 19.3L314.3 67.7 444.3 197.7l48.4-48.4c25-25 25-65.5 0-90.5L453.3 19.3c-25-25-65.5-25-90.5 0zm-71 71L58.600 323.500c-10.400 10.400-18 23.300-22.200 37.400L1 481.200C-1.500 489.700 .8 498.800 7 505s15.300 8.500 23.700 6.100l120.300-35.400c14.100-4.200 27-11.800 37.400-22.200L421.700 220.300 291.700 90.300z"/></svg><svg class="ic" style="left:42px;top:3px;width:14px;height:16px" viewBox="0 0 448 512"><path d="M135.200 17.700L128 32H32C14.300 32 0 46.300 0 64S14.300 96 32 96H416c17.700 0 32-14.300 32-32s-14.300-32-32-32H320l-7.200-14.300C307.400 6.800 296.300 0 284.200 0H163.800c-12.100 0-23.200 6.800-28.600 17.700zM416 128H32L53.200 467c1.600 25.300 22.600 45 47.900 45H346.900c25.300 0 46.300-19.700 47.900-45L416 128z"/></svg></div>
<div class="c" style="left:129px;width:206px;"><span class="s x-c" style="transform-origin:0 50%;transform:scaleX(0.9730)">Fundusz remontowy</span></div>
<div class="c" style="left:335px;width:206px;"><span class="s x-c" style="transform-origin:0 50%;transform:scaleX(0.8811)">FUNDUSZ REMONTOWY</span></div>
<div class="c" style="left:541px;width:120px;"><span class="s x-c" style="transform-origin:0 50%;transform:scaleX(0.9684)">pow. udz.</span></div>
<div class="c r" style="left:661px;width:90px;"><span class="s x-c" style="transform-origin:100% 50%;transform:scaleX(0.8187)">0 %</span></div>
<div class="c" style="left:751px;width:206px;"></div>
<div class="c" style="left:957px;width:207px;"></div>
</div>
<div class="row" style="top:362px;height:24px;line-height:24px;">
<div class="c ctr" style="left:-1px;width:50px;border-left:none;"><span class="s x-n" style="transform-origin:50% 50%;transform:scaleX(0.9700)">9</span></div>
<div class="c" style="left:49px;width:80px;"><svg class="ic" style="left:23px;top:3px;width:16px;height:16px" viewBox="0 0 512 512"><path d="M362.7 19.3L314.3 67.7 444.3 197.7l48.4-48.4c25-25 25-65.5 0-90.5L453.3 19.3c-25-25-65.5-25-90.5 0zm-71 71L58.600 323.500c-10.400 10.400-18 23.300-22.200 37.400L1 481.200C-1.500 489.700 .8 498.800 7 505s15.300 8.500 23.700 6.100l120.300-35.400c14.100-4.200 27-11.800 37.400-22.200L421.700 220.300 291.700 90.300z"/></svg><svg class="ic" style="left:42px;top:3px;width:14px;height:16px" viewBox="0 0 448 512"><path d="M135.200 17.700L128 32H32C14.300 32 0 46.300 0 64S14.300 96 32 96H416c17.700 0 32-14.300 32-32s-14.300-32-32-32H320l-7.200-14.300C307.400 6.800 296.300 0 284.200 0H163.800c-12.100 0-23.200 6.800-28.600 17.700zM416 128H32L53.200 467c1.600 25.300 22.600 45 47.900 45H346.900c25.300 0 46.300-19.700 47.900-45L416 128z"/></svg></div>
<div class="c" style="left:129px;width:206px;"><span class="s x-c" style="transform-origin:0 50%;transform:scaleX(0.9555)">Utrzymanie czystości</span></div>
<div class="c" style="left:335px;width:206px;"><span class="s x-c" style="transform-origin:0 50%;transform:scaleX(0.8682)">KOSZTY UTRZYMANIE NIERUCHO...</span></div>
<div class="c" style="left:541px;width:120px;"><span class="s x-c" style="transform-origin:0 50%;transform:scaleX(0.9535)">m3</span></div>
<div class="c r" style="left:661px;width:90px;"><span class="s x-c" style="transform-origin:100% 50%;transform:scaleX(0.8187)">0 %</span></div>
<div class="c" style="left:751px;width:206px;"></div>
<div class="c" style="left:957px;width:207px;"></div>
</div>
<div class="row alt" style="top:386px;height:24px;line-height:24px;">
<div class="c ctr" style="left:-1px;width:50px;border-left:none;"><span class="s x-n" style="transform-origin:50% 50%;transform:scaleX(0.9700)">10</span></div>
<div class="c" style="left:49px;width:80px;"><svg class="ic" style="left:23px;top:3px;width:16px;height:16px" viewBox="0 0 512 512"><path d="M362.7 19.3L314.3 67.7 444.3 197.7l48.4-48.4c25-25 25-65.5 0-90.5L453.3 19.3c-25-25-65.5-25-90.5 0zm-71 71L58.600 323.500c-10.400 10.400-18 23.300-22.200 37.400L1 481.200C-1.500 489.700 .8 498.800 7 505s15.300 8.500 23.700 6.100l120.300-35.400c14.100-4.200 27-11.800 37.400-22.200L421.700 220.300 291.700 90.300z"/></svg><svg class="ic" style="left:42px;top:3px;width:14px;height:16px" viewBox="0 0 448 512"><path d="M135.200 17.700L128 32H32C14.300 32 0 46.300 0 64S14.300 96 32 96H416c17.700 0 32-14.300 32-32s-14.300-32-32-32H320l-7.200-14.300C307.400 6.800 296.300 0 284.200 0H163.800c-12.100 0-23.200 6.800-28.600 17.700zM416 128H32L53.200 467c1.600 25.300 22.600 45 47.900 45H346.900c25.300 0 46.300-19.700 47.900-45L416 128z"/></svg></div>
<div class="c" style="left:129px;width:206px;"><span class="s x-c" style="transform-origin:0 50%;transform:scaleX(0.9674)">Podgrzanie wody(abonament)</span></div>
<div class="c" style="left:335px;width:206px;"><span class="s x-c" style="transform-origin:0 50%;transform:scaleX(0.8963)">MEDIA</span></div>
<div class="c" style="left:541px;width:120px;"><span class="s x-c" style="transform-origin:0 50%;transform:scaleX(0.9802)">pow.udz.</span></div>
<div class="c r" style="left:661px;width:90px;"></div>
<div class="c" style="left:751px;width:206px;"></div>
<div class="c" style="left:957px;width:207px;"></div>
</div>
<div class="row" style="top:410px;height:24px;line-height:24px;">
<div class="c ctr" style="left:-1px;width:50px;border-left:none;"><span class="s x-n" style="transform-origin:50% 50%;transform:scaleX(0.9700)">12</span></div>
<div class="c" style="left:49px;width:80px;"><svg class="ic" style="left:23px;top:3px;width:16px;height:16px" viewBox="0 0 512 512"><path d="M362.7 19.3L314.3 67.7 444.3 197.7l48.4-48.4c25-25 25-65.5 0-90.5L453.3 19.3c-25-25-65.5-25-90.5 0zm-71 71L58.600 323.500c-10.400 10.400-18 23.300-22.200 37.400L1 481.200C-1.500 489.700 .8 498.800 7 505s15.300 8.500 23.700 6.100l120.300-35.400c14.100-4.200 27-11.800 37.400-22.200L421.700 220.300 291.700 90.300z"/></svg><svg class="ic" style="left:42px;top:3px;width:14px;height:16px" viewBox="0 0 448 512"><path d="M135.200 17.700L128 32H32C14.300 32 0 46.300 0 64S14.300 96 32 96H416c17.700 0 32-14.300 32-32s-14.300-32-32-32H320l-7.200-14.300C307.400 6.800 296.300 0 284.200 0H163.800c-12.100 0-23.200 6.800-28.600 17.700zM416 128H32L53.200 467c1.600 25.300 22.600 45 47.900 45H346.900c25.300 0 46.300-19.700 47.900-45L416 128z"/></svg></div>
<div class="c" style="left:129px;width:206px;"><span class="s x-c" style="transform-origin:0 50%;transform:scaleX(0.9563)">Foto</span></div>
<div class="c" style="left:335px;width:206px;"><span class="s x-c" style="transform-origin:0 50%;transform:scaleX(0.8682)">KOSZTY UTRZYMANIE NIERUCHO...</span></div>
<div class="c" style="left:541px;width:120px;"><span class="s x-c" style="transform-origin:0 50%;transform:scaleX(0.9535)">m2</span></div>
<div class="c r" style="left:661px;width:90px;"><span class="s x-c" style="transform-origin:100% 50%;transform:scaleX(0.8187)">0 %</span></div>
<div class="c" style="left:751px;width:206px;"></div>
<div class="c" style="left:957px;width:207px;"></div>
</div>
<div class="row alt" style="top:434px;height:24px;line-height:24px;">
<div class="c ctr" style="left:-1px;width:50px;border-left:none;"><span class="s x-n" style="transform-origin:50% 50%;transform:scaleX(0.9700)">13</span></div>
<div class="c" style="left:49px;width:80px;"><svg class="ic" style="left:23px;top:3px;width:16px;height:16px" viewBox="0 0 512 512"><path d="M362.7 19.3L314.3 67.7 444.3 197.7l48.4-48.4c25-25 25-65.5 0-90.5L453.3 19.3c-25-25-65.5-25-90.5 0zm-71 71L58.600 323.500c-10.400 10.400-18 23.300-22.200 37.400L1 481.200C-1.500 489.700 .8 498.800 7 505s15.300 8.500 23.700 6.100l120.300-35.400c14.100-4.200 27-11.800 37.400-22.200L421.700 220.300 291.700 90.300z"/></svg><svg class="ic" style="left:42px;top:3px;width:14px;height:16px" viewBox="0 0 448 512"><path d="M135.200 17.700L128 32H32C14.300 32 0 46.300 0 64S14.300 96 32 96H416c17.700 0 32-14.300 32-32s-14.300-32-32-32H320l-7.200-14.300C307.400 6.800 296.300 0 284.200 0H163.800c-12.100 0-23.200 6.800-28.600 17.700zM416 128H32L53.200 467c1.600 25.300 22.600 45 47.900 45H346.900c25.300 0 46.300-19.700 47.900-45L416 128z"/></svg></div>
<div class="c" style="left:129px;width:206px;"><span class="s x-c" style="transform-origin:0 50%;transform:scaleX(0.9575)">R - Utrzymanie nieruchomości ws...</span></div>
<div class="c" style="left:335px;width:206px;"><span class="s x-c" style="transform-origin:0 50%;transform:scaleX(0.8682)">KOSZTY UTRZYMANIE NIERUCHO...</span></div>
<div class="c" style="left:541px;width:120px;"><span class="s x-c" style="transform-origin:0 50%;transform:scaleX(0.9127)">szt.</span></div>
<div class="c r" style="left:661px;width:90px;"><span class="s x-c" style="transform-origin:100% 50%;transform:scaleX(0.8413)">23 %</span></div>
<div class="c" style="left:751px;width:206px;"></div>
<div class="c" style="left:957px;width:207px;"><span class="s x-c" style="transform-origin:0 50%;transform:scaleX(0.9688)">Utrzymanie Nieruchomości Wspó...</span></div>
</div>
<div class="row" style="top:458px;height:25px;line-height:24px;">
<div class="c ctr" style="left:-1px;width:50px;border-left:none;"><span class="s x-n" style="transform-origin:50% 50%;transform:scaleX(0.9700)">14</span></div>
<div class="c" style="left:49px;width:80px;"><svg class="ic" style="left:23px;top:3px;width:16px;height:16px" viewBox="0 0 512 512"><path d="M362.7 19.3L314.3 67.7 444.3 197.7l48.4-48.4c25-25 25-65.5 0-90.5L453.3 19.3c-25-25-65.5-25-90.5 0zm-71 71L58.600 323.500c-10.400 10.400-18 23.300-22.200 37.400L1 481.200C-1.500 489.700 .8 498.800 7 505s15.300 8.500 23.700 6.100l120.300-35.400c14.100-4.200 27-11.800 37.400-22.200L421.700 220.300 291.700 90.300z"/></svg><svg class="ic" style="left:42px;top:3px;width:14px;height:16px" viewBox="0 0 448 512"><path d="M135.200 17.700L128 32H32C14.300 32 0 46.300 0 64S14.300 96 32 96H416c17.700 0 32-14.300 32-32s-14.300-32-32-32H320l-7.200-14.300C307.400 6.800 296.300 0 284.200 0H163.800c-12.100 0-23.200 6.800-28.600 17.700zM416 128H32L53.200 467c1.600 25.300 22.600 45 47.900 45H346.900c25.300 0 46.300-19.700 47.900-45L416 128z"/></svg></div>
<div class="c" style="left:129px;width:206px;"><span class="s x-c" style="transform-origin:0 50%;transform:scaleX(0.9624)">R. Odpady komunalne</span></div>
<div class="c" style="left:335px;width:206px;"><span class="s x-c" style="transform-origin:0 50%;transform:scaleX(0.8682)">KOSZTY UTRZYMANIE NIERUCHO...</span></div>
<div class="c" style="left:541px;width:120px;"><span class="s x-c" style="transform-origin:0 50%;transform:scaleX(0.9127)">szt.</span></div>
<div class="c r" style="left:661px;width:90px;"><span class="s x-c" style="transform-origin:100% 50%;transform:scaleX(0.8187)">0 %</span></div>
<div class="c" style="left:751px;width:206px;"></div>
<div class="c" style="left:957px;width:207px;"><span class="s x-c" style="transform-origin:0 50%;transform:scaleX(0.9768)">Odpady komunalne</span></div>
</div>
<div class="row alt" style="top:483px;height:24px;line-height:24px;">
<div class="c ctr" style="left:-1px;width:50px;border-left:none;"><span class="s x-n" style="transform-origin:50% 50%;transform:scaleX(0.9700)">15</span></div>
<div class="c" style="left:49px;width:80px;"><svg class="ic" style="left:23px;top:3px;width:16px;height:16px" viewBox="0 0 512 512"><path d="M362.7 19.3L314.3 67.7 444.3 197.7l48.4-48.4c25-25 25-65.5 0-90.5L453.3 19.3c-25-25-65.5-25-90.5 0zm-71 71L58.600 323.500c-10.400 10.400-18 23.300-22.200 37.400L1 481.200C-1.500 489.700 .8 498.800 7 505s15.300 8.500 23.700 6.100l120.300-35.400c14.100-4.200 27-11.800 37.400-22.200L421.700 220.300 291.700 90.300z"/></svg><svg class="ic" style="left:42px;top:3px;width:14px;height:16px" viewBox="0 0 448 512"><path d="M135.200 17.700L128 32H32C14.300 32 0 46.300 0 64S14.300 96 32 96H416c17.700 0 32-14.300 32-32s-14.300-32-32-32H320l-7.200-14.300C307.400 6.800 296.300 0 284.200 0H163.800c-12.100 0-23.200 6.800-28.600 17.700zM416 128H32L53.200 467c1.600 25.300 22.600 45 47.900 45H346.900c25.300 0 46.300-19.700 47.900-45L416 128z"/></svg></div>
<div class="c" style="left:129px;width:206px;"><span class="s x-c" style="transform-origin:0 50%;transform:scaleX(0.9357)">R - Zimna woda i ścieki</span></div>
<div class="c" style="left:335px;width:206px;"><span class="s x-c" style="transform-origin:0 50%;transform:scaleX(0.8963)">MEDIA</span></div>
<div class="c" style="left:541px;width:120px;"><span class="s x-c" style="transform-origin:0 50%;transform:scaleX(0.9535)">m3</span></div>
<div class="c r" style="left:661px;width:90px;"><span class="s x-c" style="transform-origin:100% 50%;transform:scaleX(0.8187)">8 %</span></div>
<div class="c" style="left:751px;width:206px;"></div>
<div class="c" style="left:957px;width:207px;"><span class="s x-c" style="transform-origin:0 50%;transform:scaleX(0.9512)">Zimna woda i ścieki</span></div>
</div>
<div class="row" style="top:507px;height:24px;line-height:24px;">
<div class="c ctr" style="left:-1px;width:50px;border-left:none;"><span class="s x-n" style="transform-origin:50% 50%;transform:scaleX(0.9700)">17</span></div>
<div class="c" style="left:49px;width:80px;"><svg class="ic" style="left:23px;top:3px;width:16px;height:16px" viewBox="0 0 512 512"><path d="M362.7 19.3L314.3 67.7 444.3 197.7l48.4-48.4c25-25 25-65.5 0-90.5L453.3 19.3c-25-25-65.5-25-90.5 0zm-71 71L58.600 323.500c-10.400 10.400-18 23.300-22.200 37.400L1 481.200C-1.500 489.700 .8 498.800 7 505s15.300 8.500 23.700 6.100l120.300-35.400c14.100-4.200 27-11.800 37.400-22.200L421.700 220.300 291.700 90.300z"/></svg><svg class="ic" style="left:42px;top:3px;width:14px;height:16px" viewBox="0 0 448 512"><path d="M135.200 17.700L128 32H32C14.300 32 0 46.300 0 64S14.300 96 32 96H416c17.700 0 32-14.300 32-32s-14.300-32-32-32H320l-7.200-14.300C307.400 6.800 296.300 0 284.200 0H163.800c-12.100 0-23.200 6.800-28.600 17.700zM416 128H32L53.200 467c1.600 25.300 22.600 45 47.900 45H346.900c25.300 0 46.300-19.700 47.900-45L416 128z"/></svg></div>
<div class="c" style="left:129px;width:206px;"><span class="s x-c" style="transform-origin:0 50%;transform:scaleX(0.9461)">R - Centralne ogrzewanie</span></div>
<div class="c" style="left:335px;width:206px;"><span class="s x-c" style="transform-origin:0 50%;transform:scaleX(0.8963)">MEDIA</span></div>
<div class="c" style="left:541px;width:120px;"><span class="s x-c" style="transform-origin:0 50%;transform:scaleX(0.7200)">GJ</span></div>
<div class="c r" style="left:661px;width:90px;"><span class="s x-c" style="transform-origin:100% 50%;transform:scaleX(0.8413)">23 %</span></div>
<div class="c" style="left:751px;width:206px;"></div>
<div class="c" style="left:957px;width:207px;"><span class="s x-c" style="transform-origin:0 50%;transform:scaleX(0.9562)">Centralne ogrzewanie</span></div>
</div>
<div class="row alt" style="top:531px;height:24px;line-height:24px;">
<div class="c ctr" style="left:-1px;width:50px;border-left:none;"><span class="s x-n" style="transform-origin:50% 50%;transform:scaleX(0.9700)">18</span></div>
<div class="c" style="left:49px;width:80px;"><svg class="ic" style="left:23px;top:3px;width:16px;height:16px" viewBox="0 0 512 512"><path d="M362.7 19.3L314.3 67.7 444.3 197.7l48.4-48.4c25-25 25-65.5 0-90.5L453.3 19.3c-25-25-65.5-25-90.5 0zm-71 71L58.600 323.500c-10.400 10.400-18 23.300-22.200 37.400L1 481.200C-1.500 489.700 .8 498.800 7 505s15.300 8.500 23.700 6.100l120.300-35.400c14.100-4.200 27-11.800 37.400-22.200L421.700 220.300 291.700 90.300z"/></svg><svg class="ic" style="left:42px;top:3px;width:14px;height:16px" viewBox="0 0 448 512"><path d="M135.200 17.700L128 32H32C14.300 32 0 46.300 0 64S14.300 96 32 96H416c17.700 0 32-14.300 32-32s-14.300-32-32-32H320l-7.200-14.300C307.400 6.800 296.300 0 284.200 0H163.800c-12.100 0-23.200 6.800-28.600 17.700zM416 128H32L53.200 467c1.600 25.300 22.600 45 47.900 45H346.900c25.300 0 46.300-19.700 47.900-45L416 128z"/></svg></div>
<div class="c" style="left:129px;width:206px;"><span class="s x-c" style="transform-origin:0 50%;transform:scaleX(0.9418)">R - Podgrzanie wody(liczniki)</span></div>
<div class="c" style="left:335px;width:206px;"><span class="s x-c" style="transform-origin:0 50%;transform:scaleX(0.8963)">MEDIA</span></div>
<div class="c" style="left:541px;width:120px;"><span class="s x-c" style="transform-origin:0 50%;transform:scaleX(0.7200)">GJ</span></div>
<div class="c r" style="left:661px;width:90px;"><span class="s x-c" style="transform-origin:100% 50%;transform:scaleX(0.8413)">23 %</span></div>
<div class="c" style="left:751px;width:206px;"></div>
<div class="c" style="left:957px;width:207px;"><span class="s x-c" style="transform-origin:0 50%;transform:scaleX(0.9578)">Podgrzanie wody(liczniki)</span></div>
</div>
<div class="row" style="top:555px;height:24px;line-height:24px;">
<div class="c ctr" style="left:-1px;width:50px;border-left:none;"><span class="s x-n" style="transform-origin:50% 50%;transform:scaleX(0.9700)">19</span></div>
<div class="c" style="left:49px;width:80px;"><svg class="ic" style="left:23px;top:3px;width:16px;height:16px" viewBox="0 0 512 512"><path d="M362.7 19.3L314.3 67.7 444.3 197.7l48.4-48.4c25-25 25-65.5 0-90.5L453.3 19.3c-25-25-65.5-25-90.5 0zm-71 71L58.600 323.500c-10.400 10.400-18 23.300-22.200 37.400L1 481.200C-1.500 489.700 .8 498.800 7 505s15.300 8.500 23.700 6.100l120.300-35.400c14.100-4.200 27-11.800 37.400-22.200L421.700 220.300 291.700 90.300z"/></svg><svg class="ic" style="left:42px;top:3px;width:14px;height:16px" viewBox="0 0 448 512"><path d="M135.200 17.700L128 32H32C14.300 32 0 46.300 0 64S14.300 96 32 96H416c17.700 0 32-14.300 32-32s-14.300-32-32-32H320l-7.200-14.300C307.400 6.800 296.300 0 284.200 0H163.800c-12.100 0-23.200 6.800-28.600 17.700zM416 128H32L53.200 467c1.600 25.300 22.600 45 47.900 45H346.900c25.300 0 46.300-19.700 47.900-45L416 128z"/></svg></div>
<div class="c" style="left:129px;width:206px;"><span class="s x-c" style="transform-origin:0 50%;transform:scaleX(0.9245)">R - Energia elektryczna</span></div>
<div class="c" style="left:335px;width:206px;"><span class="s x-c" style="transform-origin:0 50%;transform:scaleX(0.8682)">KOSZTY UTRZYMANIE NIERUCHO...</span></div>
<div class="c" style="left:541px;width:120px;"><span class="s x-c" style="transform-origin:0 50%;transform:scaleX(0.9684)">pow. udz.</span></div>
<div class="c r" style="left:661px;width:90px;"><span class="s x-c" style="transform-origin:100% 50%;transform:scaleX(0.8413)">23 %</span></div>
<div class="c" style="left:751px;width:206px;"></div>
<div class="c" style="left:957px;width:207px;"><span class="s x-c" style="transform-origin:0 50%;transform:scaleX(0.9444)">Energia elektryczna</span></div>
</div>
<div class="row alt" style="top:579px;height:24px;line-height:24px;">
<div class="c ctr" style="left:-1px;width:50px;border-left:none;"><span class="s x-n" style="transform-origin:50% 50%;transform:scaleX(0.9700)">20</span></div>
<div class="c" style="left:49px;width:80px;"><svg class="ic" style="left:23px;top:3px;width:16px;height:16px" viewBox="0 0 512 512"><path d="M362.7 19.3L314.3 67.7 444.3 197.7l48.4-48.4c25-25 25-65.5 0-90.5L453.3 19.3c-25-25-65.5-25-90.5 0zm-71 71L58.600 323.500c-10.400 10.400-18 23.300-22.200 37.400L1 481.200C-1.500 489.700 .8 498.800 7 505s15.300 8.500 23.700 6.100l120.300-35.400c14.100-4.200 27-11.800 37.400-22.200L421.700 220.300 291.700 90.300z"/></svg><svg class="ic" style="left:42px;top:3px;width:14px;height:16px" viewBox="0 0 448 512"><path d="M135.200 17.700L128 32H32C14.300 32 0 46.300 0 64S14.300 96 32 96H416c17.700 0 32-14.300 32-32s-14.300-32-32-32H320l-7.200-14.300C307.400 6.800 296.300 0 284.200 0H163.800c-12.100 0-23.200 6.800-28.600 17.700zM416 128H32L53.200 467c1.600 25.300 22.600 45 47.900 45H346.900c25.300 0 46.300-19.700 47.900-45L416 128z"/></svg></div>
<div class="c" style="left:129px;width:206px;"><span class="s x-c" style="transform-origin:0 50%;transform:scaleX(0.9590)">R-Podgrzanie wody(abonament)</span></div>
<div class="c" style="left:335px;width:206px;"><span class="s x-c" style="transform-origin:0 50%;transform:scaleX(0.8963)">MEDIA</span></div>
<div class="c" style="left:541px;width:120px;"><span class="s x-c" style="transform-origin:0 50%;transform:scaleX(0.9802)">pow.udz.</span></div>
<div class="c r" style="left:661px;width:90px;"></div>
<div class="c" style="left:751px;width:206px;"></div>
<div class="c" style="left:957px;width:207px;"><span class="s x-c" style="transform-origin:0 50%;transform:scaleX(0.9674)">Podgrzanie wody(abonament)</span></div>
</div>
<div class="row" style="top:603px;height:24px;line-height:24px;">
<div class="c ctr" style="left:-1px;width:50px;border-left:none;"><span class="s x-n" style="transform-origin:50% 50%;transform:scaleX(0.9700)">80</span></div>
<div class="c" style="left:49px;width:80px;"><svg class="ic" style="left:23px;top:3px;width:16px;height:16px" viewBox="0 0 512 512"><path d="M362.7 19.3L314.3 67.7 444.3 197.7l48.4-48.4c25-25 25-65.5 0-90.5L453.3 19.3c-25-25-65.5-25-90.5 0zm-71 71L58.600 323.500c-10.400 10.400-18 23.300-22.200 37.400L1 481.200C-1.500 489.700 .8 498.800 7 505s15.300 8.500 23.700 6.100l120.300-35.400c14.100-4.200 27-11.800 37.400-22.200L421.700 220.300 291.700 90.300z"/></svg><svg class="ic" style="left:42px;top:3px;width:14px;height:16px" viewBox="0 0 448 512"><path d="M135.200 17.700L128 32H32C14.300 32 0 46.300 0 64S14.300 96 32 96H416c17.700 0 32-14.300 32-32s-14.300-32-32-32H320l-7.200-14.300C307.400 6.800 296.300 0 284.200 0H163.800c-12.100 0-23.200 6.800-28.600 17.700zM416 128H32L53.200 467c1.600 25.300 22.600 45 47.900 45H346.900c25.300 0 46.300-19.700 47.900-45L416 128z"/></svg></div>
<div class="c" style="left:129px;width:206px;"><span class="s x-c" style="transform-origin:0 50%;transform:scaleX(0.9438)">Odsetki</span></div>
<div class="c" style="left:335px;width:206px;"><span class="s x-c" style="transform-origin:0 50%;transform:scaleX(0.8485)">ODSETKI</span></div>
<div class="c" style="left:541px;width:120px;"><span class="s x-c" style="transform-origin:0 50%;transform:scaleX(0.9127)">szt.</span></div>
<div class="c r" style="left:661px;width:90px;"><span class="s x-c" style="transform-origin:100% 50%;transform:scaleX(0.8187)">0 %</span></div>
<div class="c" style="left:751px;width:206px;"></div>
<div class="c" style="left:957px;width:207px;"></div>
</div>
<div class="row alt" style="top:627px;height:25px;line-height:24px;">
<div class="c ctr" style="left:-1px;width:50px;border-left:none;"><span class="s x-n" style="transform-origin:50% 50%;transform:scaleX(0.9700)">99</span></div>
<div class="c" style="left:49px;width:80px;"><svg class="ic" style="left:23px;top:3px;width:16px;height:16px" viewBox="0 0 512 512"><path d="M362.7 19.3L314.3 67.7 444.3 197.7l48.4-48.4c25-25 25-65.5 0-90.5L453.3 19.3c-25-25-65.5-25-90.5 0zm-71 71L58.600 323.500c-10.400 10.400-18 23.300-22.200 37.400L1 481.200C-1.500 489.700 .8 498.800 7 505s15.300 8.500 23.700 6.100l120.300-35.400c14.100-4.200 27-11.800 37.400-22.200L421.700 220.300 291.700 90.300z"/></svg><svg class="ic" style="left:42px;top:3px;width:14px;height:16px" viewBox="0 0 448 512"><path d="M135.200 17.700L128 32H32C14.300 32 0 46.300 0 64S14.300 96 32 96H416c17.700 0 32-14.300 32-32s-14.300-32-32-32H320l-7.200-14.300C307.400 6.800 296.300 0 284.200 0H163.800c-12.100 0-23.200 6.800-28.600 17.700zM416 128H32L53.200 467c1.600 25.300 22.600 45 47.900 45H346.900c25.300 0 46.300-19.700 47.900-45L416 128z"/></svg></div>
<div class="c" style="left:129px;width:206px;"><span class="s x-c" style="transform-origin:0 50%;transform:scaleX(0.8742)">BZ</span></div>
<div class="c" style="left:335px;width:206px;"></div>
<div class="c" style="left:541px;width:120px;"><span class="s x-c" style="transform-origin:0 50%;transform:scaleX(0.9127)">szt.</span></div>
<div class="c r" style="left:661px;width:90px;"></div>
<div class="c" style="left:751px;width:206px;"></div>
<div class="c" style="left:957px;width:207px;"></div>
</div>
<div class="row" style="top:652px;height:22px;line-height:24px;border-bottom:none;">
<div class="c ctr" style="left:-1px;width:50px;border-left:none;"><span class="s x-n" style="transform-origin:50% 50%;transform:scaleX(0.9700)">99</span></div>
<div class="c" style="left:49px;width:80px;"><svg class="ic" style="left:23px;top:3px;width:16px;height:16px" viewBox="0 0 512 512"><path d="M362.7 19.3L314.3 67.7 444.3 197.7l48.4-48.4c25-25 25-65.5 0-90.5L453.3 19.3c-25-25-65.5-25-90.5 0zm-71 71L58.600 323.500c-10.400 10.400-18 23.300-22.200 37.400L1 481.200C-1.500 489.700 .8 498.800 7 505s15.300 8.500 23.700 6.100l120.300-35.400c14.100-4.200 27-11.800 37.400-22.200L421.700 220.300 291.700 90.300z"/></svg><svg class="ic" style="left:42px;top:3px;width:14px;height:16px" viewBox="0 0 448 512"><path d="M135.200 17.700L128 32H32C14.300 32 0 46.300 0 64S14.300 96 32 96H416c17.700 0 32-14.300 32-32s-14.300-32-32-32H320l-7.200-14.300C307.400 6.800 296.300 0 284.200 0H163.800c-12.100 0-23.200 6.800-28.600 17.700zM416 128H32L53.200 467c1.600 25.300 22.600 45 47.900 45H346.900c25.300 0 46.300-19.700 47.900-45L416 128z"/></svg></div>
<div class="c" style="left:129px;width:206px;"><span class="s x-c" style="transform-origin:0 50%;transform:scaleX(0.9111)">BO</span></div>
<div class="c" style="left:335px;width:206px;"></div>
<div class="c" style="left:541px;width:120px;"><span class="s x-c" style="transform-origin:0 50%;transform:scaleX(0.9127)">szt.</span></div>
<div class="c r" style="left:661px;width:90px;"></div>
<div class="c" style="left:751px;width:206px;"></div>
<div class="c" style="left:957px;width:207px;"></div>
</div>
<svg class="abs" style="left:330px;top:95px" width="60" height="60"><path d="M48.200 9.500 L19 40.500" stroke="#e0141c" stroke-width="1.900"/><path d="M13.700 46.400 L17 36.400 L23.800 42.900Z" fill="#e0141c" stroke="#e0141c" stroke-width="1" stroke-linejoin="round"/></svg>
<div class="abs" style="left:254px;top:690px;font-size:14.500px;line-height:22px;color:#555;white-space:nowrap"><span class="s x-pg" style="transform-origin:0 50%;transform:scaleX(0.9849)">Page 1 of 1 (21 items)</span></div>
<div class="pb" style="left:421.4px"><svg viewBox="0 0 12 12" style="left:12px;top:12px;width:12px;height:12px"><path d="M1.500 1 V11 M10 1.500 L5 6 L10 10.500"/></svg></div>
<div class="pb" style="left:465.4px"><svg viewBox="0 0 12 12" style="left:11px;top:12px;width:12px;height:12px"><path d="M8.500 1.500 L3.500 6 L8.500 10.500"/></svg></div>
<div class="pb" style="left:1129.4px"><svg viewBox="0 0 12 12" style="left:11px;top:12px;width:12px;height:12px"><path d="M3.500 1.500 L8.500 6 L3.500 10.500"/></svg></div>
<div class="pb" style="left:1173.4px"><svg viewBox="0 0 12 12" style="left:11px;top:12px;width:12px;height:12px"><path d="M10.500 1 V11 M2 1.500 L7 6 L2 10.500"/></svg></div>
<div class="abs" style="left:797px;top:683px;width:36px;height:36px;border:1px solid #e8ecf0;border-radius:4px;box-sizing:border-box;text-align:center;line-height:34px;font-size:14.500px;color:#f9603a">1</div>
<div class="abs" style="left:1217px;top:683px;width:80px;height:36px;border:1px solid #d4d8dc;border-radius:4px;box-sizing:border-box;line-height:34px;font-size:14.500px;color:#444;padding-left:8px"><span class="s x-pg" style="transform-origin:0 50%;transform:scaleX(0.9242)">200</span><svg viewBox="0 0 10 5" style="position:absolute;left:56px;top:16px;width:9px;height:4.500px"><path d="M0 0 H10 L5 5Z" fill="#333"/></svg></div>
<div class="abs" style="left:1305px;top:690px;font-size:14.500px;line-height:22px;color:#555;white-space:nowrap"><span class="s x-pg" style="transform-origin:0 50%;transform:scaleX(1.0078)">items per page</span></div>
</div></body></html>
